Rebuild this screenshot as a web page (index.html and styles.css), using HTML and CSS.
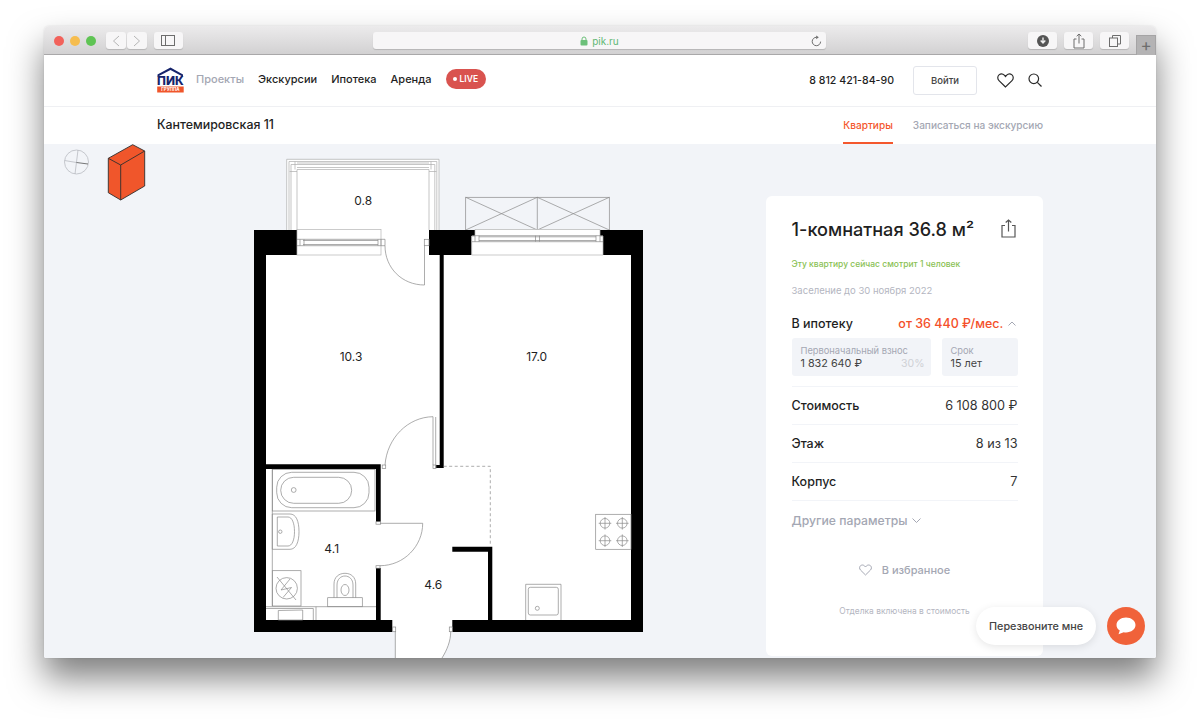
FILE: index.html
```html
<!DOCTYPE html>
<html lang="ru">
<head>
  <meta charset="UTF-8">
  <meta name="viewport" content="width=device-width, initial-scale=1.0">
  <title>pik.ru</title>
  <link rel="stylesheet" href="styles.css">
</head>
<body>
  <div class="window">

    <!-- Панель браузера -->
    <div class="toolbar">
      <div class="lights">
        <span class="light red"></span>
        <span class="light yellow"></span>
        <span class="light green"></span>
      </div>
      <div class="tool-pair">
        <span class="tool-btn narrow">
          <svg width="8" height="12" viewBox="0 0 8 12"><path d="M7 1 1.500 6 7 11" class="tool-line faint"/></svg>
        </span>
        <span class="tool-btn narrow">
          <svg width="8" height="12" viewBox="0 0 8 12"><path d="M1 1 6.500 6 1 11" class="tool-line faint"/></svg>
        </span>
      </div>
      <span class="tool-btn wide sidebar-btn">
        <svg width="14" height="11" viewBox="0 0 14 11"><rect x=".5" y=".5" width="13" height="10" class="tool-line"/><path d="M4.500 .5v10" class="tool-line"/></svg>
      </span>
      <div class="address">
        <svg width="8" height="10" viewBox="0 0 8 10"><rect x=".5" y="4" width="7" height="5.500" rx="1" fill="#6cc07a"/><path d="M2 4.500V3a2 2 0 0 1 4 0v1.500" fill="none" stroke="#6cc07a"/></svg>
        <span class="address-text">pik.ru</span>
        <svg class="reload" width="11" height="12" viewBox="0 0 11 12"><path d="M9.600 6.600A4.200 4.200 0 1 1 5.500 2.300" class="tool-line"/><path d="M5.200 .4 7.800 2.300 5.200 4.200z" fill="#6d6d6d"/></svg>
      </div>
      <div class="tool-group">
        <span class="tool-btn wide">
          <svg width="12" height="12" viewBox="0 0 12 12"><circle cx="6" cy="6" r="6" fill="#555"/><path d="M6 2.500v5M3.700 5.500 6 8l2.300-2.500" fill="none" stroke="#eee" stroke-width="1.400"/></svg>
        </span>
        <span class="tool-btn wide">
          <svg width="12" height="16" viewBox="0 0 12 16"><path d="M3.500 6H1v9h10V6H8.500M6 10.500V1M3.700 3.200 6 1l2.300 2.200" class="tool-line"/></svg>
        </span>
        <span class="tool-btn wide">
          <svg width="12" height="12" viewBox="0 0 12 12"><rect x=".5" y="3" width="8" height="8.500" class="tool-line"/><path d="M3.500 3V.5h8v8.500H8.500" class="tool-line"/></svg>
        </span>
      </div>
      <span class="new-tab">+</span>
    </div>

    <!-- Шапка сайта -->
    <header class="nav">
      <a class="logo">
        <svg width="27" height="26" viewBox="0 0 27 26">
          <path d="M.5 7.500 13.500 .6 26 7.500V9.800L13.500 3 .5 9.800z" fill="#16246b"/>
          <text x="13.400" y="18.400" class="logo-name" text-anchor="middle">ПИК</text>
          <rect x=".2" y="19.500" width="26.500" height="6" fill="#f0562b"/>
          <text x="13.400" y="24.300" class="logo-sub" text-anchor="middle">ГРУППА</text>
        </svg>
      </a>
      <a class="nav-link muted">Проекты</a>
      <a class="nav-link">Экскурсии</a>
      <a class="nav-link">Ипотека</a>
      <a class="nav-link">Аренда</a>
      <span class="live"><i></i>LIVE</span>
      <span class="phone">8 812 421-84-90</span>
      <button class="login">Войти</button>
      <svg class="heart-icon" width="17" height="15" viewBox="0 0 17 15"><path d="M8.500 14 2 7.600C.3 5.900.4 3.300 2 1.900 3.700.5 6 .8 7.300 2.200L8.500 3.500 9.700 2.200C11 .8 13.300.5 15 1.900c1.600 1.400 1.700 4 0 5.700z" fill="none" stroke="#2b2b2b" stroke-width="1.200"/></svg>
      <svg class="search-icon" width="14" height="14" viewBox="0 0 14 14"><circle cx="5.800" cy="5.800" r="4.800" fill="none" stroke="#2b2b2b" stroke-width="1.200"/><path d="M9.300 9.300 13.500 13.500" stroke="#2b2b2b" stroke-width="1.200"/></svg>
    </header>

    <div class="subnav">
      <span class="building">Кантемировская 11</span>
      <a class="tab active">Квартиры</a>
      <a class="tab">Записаться на экскурсию</a>
    </div>

    <!-- Планировка и карточка -->
    <main class="content">
      <svg class="plan" width="722" height="514" viewBox="44 144 722 514">
        <!-- компас и корпус -->
        <circle cx="76.500" cy="162" r="12" class="compass"/>
        <path d="M78 150 75 174M64.500 160.500 76.500 162.500" class="compass"/>
        <path d="M76.500 162.500 88 164" class="compass-hand"/>
        <path d="M108.300 158.300 132.700 144.700 144.700 151V186L120.700 200 108.300 192.700z" class="block"/>
        <path d="M108.300 158.300 120.700 165 144.700 151M120.700 165V200" class="block"/>

        <!-- лоджия -->
        <rect x="286.700" y="159.300" width="152.300" height="71" class="floor"/>
        <path d="M286.700 230V159.300H439V230M289 230V161.500H436.800V230M291 230V164.500H434.800V230M297 230V169.500H429V230M297 163H429M297 167.500H429" class="thin pale"/>
        <path d="M289.500 171.500H297M429 171.500H436.500M295 161.500V169.500M431 161.500V169.500" class="thin pale"/>

        <!-- балкон у кухни -->
        <rect x="465.700" y="197.300" width="143.600" height="33" class="thin"/>
        <path d="M537.300 197.300V230M465.700 197.300 537.300 230M537.300 197.300 465.700 230M537.300 197.300 609.300 230M609.300 197.300 537.300 230" class="thin"/>

        <!-- полы -->
        <rect x="266" y="230" width="365" height="392" class="floor"/>
        <path d="M392 620H452.300V631.700H450.700C450.700 641 447 650 442 658H395.300V631.700H392z" class="floor"/>

        <!-- стены -->
        <path d="M254 230H297V255H266V620H392.300V632H254z" class="wall"/>
        <path d="M429 230H475V236H471.700V255H443.700V468H435.700V465H439.700V255H429z" class="wall"/>
        <path d="M600 230H643V632H452.300V620H631V255H603V236H600z" class="wall"/>
        <path d="M266 464.300H380.700V469H266z" class="wall"/>
        <path d="M376 469H380.700V521.700H376zM376 568H380.700V620H376z" class="wall"/>
        <path d="M452.300 546.700H492.300V620H488V551.700H452.300z" class="wall"/>
        <path d="M443.700 466.300H490.300V546" class="dash"/>

        <!-- окна -->
        <rect x="297" y="229.500" width="84" height="25.500" class="glass"/>
        <path d="M297 239.300H385M297 245.700H385M303 240.500H378M303 244.500H378M300 239.300V245.700M304 239.300V245.700M378 239.300V245.700M381 239.300V245.700M385 239.300V245.700" class="thin"/>
        <rect x="424.300" y="239.300" width="4.700" height="6.400" class="thin"/>
        <path d="M475 229.500H600V236H603V255H471.700V236H475z" class="glass"/>
        <path d="M472 235.700H603M472 241.700H603M479 236.800H596M479 240.500H596M475 235.700V241.700M479 235.700V241.700M535.500 235.700V241.700M539.500 235.700V241.700M596 235.700V241.700M600 235.700V241.700" class="thin"/>

        <!-- двери -->
        <path d="M385 245.700C385 268 402 285 424.500 285V245.700" class="thin"/>
        <path d="M385 465C387 438 408 417 433 416.700V465M435.700 417V465" class="thin"/>
        <path d="M380 523.300H422.700C422.700 546 404 565.700 380 565.700" class="thin"/>
        <path d="M395.300 631.700V658M450.700 631.700C450.700 641 447 650 442 658" class="thin"/>
        <rect x="382.200" y="465" width="3.500" height="3.500" class="thin"/>
        <rect x="433" y="465" width="3" height="3.500" class="thin"/>
        <rect x="376" y="521.700" width="4.700" height="2.500" class="thin"/>
        <rect x="376" y="565.700" width="4" height="2.500" class="thin"/>
        <rect x="392.700" y="627" width="3" height="4.700" class="thin"/>
        <rect x="449.300" y="627" width="3" height="4.700" class="thin"/>

        <!-- ванная -->
        <rect x="272.300" y="469.300" width="102.700" height="41.700" class="thin"/>
        <rect x="276.700" y="472.300" width="92.300" height="35.400" rx="15" class="thin"/>
        <rect x="280.700" y="477.300" width="71" height="26" rx="13" class="thin"/>
        <circle cx="293.700" cy="490" r="2.400" class="thin"/>
        <path d="M272.300 514H290C296 514 299 521 299 531.700 299 542 296 549.300 290 549.300H272.300z" class="thin"/>
        <path d="M277.300 517H288C292 517 294.500 523 294.500 531.700 294.500 540 292 546 288 546H277.300z" class="thin"/>
        <circle cx="280.300" cy="531.700" r="1.700" class="thin"/>
        <path d="M272.300 469V606" class="thin"/>
        <rect x="272.300" y="570.700" width="28.700" height="35.300" class="thin"/>
        <circle cx="286.700" cy="588.300" r="10.700" class="thin"/>
        <path d="M277 577 296 600M290 579 281 590 291.500 587.500 283 597.500" class="thin"/>
        <rect x="327.700" y="597.700" width="34.600" height="9" class="thin"/>
        <path d="M334 597.700V584C334 577 339 573.300 345 573.300S355.700 577 355.700 584V597.700" class="thin"/>
        <path d="M337 597.700V585C337 579 341 576 345 576S353 579 353 585V597.700" class="thin"/>
        <ellipse cx="345" cy="590" rx="4" ry="5.500" class="thin"/>
        <path d="M266 606.700H376M266 608.500H313.300V620M316 606.700V620M278.300 610.500 302.700 610V620H278.300z" class="thin"/>

        <!-- плита и душ -->
        <rect x="595.700" y="514.300" width="35.300" height="35" class="thin"/>
        <g class="thin">
          <circle cx="605" cy="523.300" r="4.800"/><path d="M605 517V529.600M598.700 523.300H611.300"/>
          <circle cx="622.300" cy="523.300" r="4.800"/><path d="M622.300 517V529.600M616 523.300H628.600"/>
          <circle cx="605" cy="540.700" r="4.800"/><path d="M605 534.400V547M598.700 540.700H611.300"/>
          <circle cx="622.300" cy="540.700" r="4.800"/><path d="M622.300 534.400V547M616 540.700H628.600"/>
        </g>
        <path d="M525.700 620V584.300H561V620" class="thin"/>
        <rect x="528.300" y="587.300" width="30" height="27.700" rx="2" class="thin"/>
        <circle cx="537.300" cy="608.300" r="2" class="thin"/>

        <!-- площади -->
        <text x="363.300" y="204.500" class="area">0.8</text>
        <text x="351" y="361" class="area">10.3</text>
        <text x="536.700" y="361" class="area">17.0</text>
        <text x="331.700" y="553" class="area">4.1</text>
        <text x="433.300" y="589" class="area">4.6</text>
      </svg>

      <aside class="card">
        <div class="card-head">
          <h1>1-комнатная 36.8 м²</h1>
          <svg width="15" height="19" viewBox="0 0 15 19"><path d="M4 6.500H1V18H14V6.500H11M7.500 12.500V1M4.700 3.500 7.500 1l2.800 2.500" fill="none" stroke="#555" stroke-width="1.200"/></svg>
        </div>
        <p class="watching">Эту квартиру сейчас смотрит 1 человек</p>
        <p class="settle">Заселение до 30 ноября 2022</p>
        <div class="mortgage-row">
          <span class="row-name">В ипотеку</span>
          <span class="price">от 36 440 ₽/мес.
            <svg width="8" height="5" viewBox="0 0 8 5"><path d="M.5 4.500 4 1 7.500 4.500" fill="none" stroke="#a4a7b3"/></svg>
          </span>
        </div>
        <div class="mortgage-boxes">
          <div class="mbox first">
            <span class="mbox-label">Первоначальный взнос</span>
            <span class="mbox-value">1 832 640 ₽</span>
            <span class="percent">30%</span>
          </div>
          <div class="mbox second">
            <span class="mbox-label">Срок</span>
            <span class="mbox-value">15 лет</span>
          </div>
        </div>
        <div class="param"><span class="row-name">Стоимость</span><span class="param-value">6 108 800 ₽</span></div>
        <div class="param"><span class="row-name">Этаж</span><span class="param-value">8 из 13</span></div>
        <div class="param"><span class="row-name">Корпус</span><span class="param-value">7</span></div>
        <div class="more">Другие параметры
          <svg width="9" height="5" viewBox="0 0 9 5"><path d="M.5 .5 4.500 4.500 8.500 .5" fill="none" stroke="#a4a7b3"/></svg>
        </div>
        <div class="favorite">
          <svg width="13" height="12" viewBox="0 0 17 15"><path d="M8.500 14 2 7.600C.3 5.900.4 3.300 2 1.900 3.700.5 6 .8 7.300 2.200L8.500 3.500 9.700 2.200C11 .8 13.300.5 15 1.900c1.600 1.400 1.700 4 0 5.700z" fill="none" stroke="#a4a7b3" stroke-width="1.300"/></svg>
          В избранное
        </div>
        <p class="finish">Отделка включена в стоимость</p>
      </aside>

      <!-- Обратный звонок поверх контента -->
      <div class="callback">
        <span class="callback-label">Перезвоните мне</span>
        <span class="chat">
          <svg width="20" height="18" viewBox="0 0 20 18"><path d="M10 .5C4.800.5.500 3.700.500 8c0 2.400 1.300 4.300 3.300 5.600L2.500 17.300l5.200-2.100c.7.100 1.500.2 2.300.2 5.200 0 9.500-3.200 9.500-7.400S15.200.5 10 .5z" fill="#fff"/></svg>
        </span>
      </div>
    </main>
  </div>
</body>
</html>
```

FILE: styles.css
```css
/* Общее */
* {
  box-sizing: border-box;
}

body {
  margin: 0;
  height: 722px;
  overflow: hidden;
  background: #fff;
  font-family: 'Inter', 'Liberation Sans', sans-serif;
  color: #1f1f1f;
}

a {
  text-decoration: none;
  color: inherit;
}

/* Окно браузера */
.window {
  width: 1112px;
  height: 632px;
  margin: 26px 0 0 44px;
  border-radius: 5px 5px 2px 2px;
  overflow: hidden;
  background: #fff;
  box-shadow: 0 20px 34px rgba(0, 0, 0, 0.5), 0 0 2px rgba(0, 0, 0, 0.12);
}

.toolbar {
  display: flex;
  align-items: flex-start;
  height: 29px;
  padding: 6px 0 0 10px;
  background: linear-gradient(to bottom, #ecebec, #d2d1d2);
  border-bottom: 1px solid #a9a8a9;
}

.lights {
  display: flex;
  gap: 6px;
  margin-top: 4px;
  margin-right: 10px;
}

.light {
  width: 10px;
  height: 10px;
  border-radius: 50%;
}

.light.red { background: #f2625b; }
.light.yellow { background: #f6bd4f; }
.light.green { background: #5fc454; }

.tool-pair {
  display: flex;
  gap: 1px;
  margin-right: 7px;
}

.tool-btn {
  display: flex;
  align-items: center;
  justify-content: center;
  height: 17px;
  background: #f7f6f7;
  border-radius: 3px;
  box-shadow: 0 1px 1px rgba(0, 0, 0, 0.15);
}

.tool-btn.narrow { width: 20px; }
.tool-btn.wide { width: 29px; }

.tool-line {
  fill: none;
  stroke: #6d6d6d;
  stroke-width: 1;
}

.tool-line.faint {
  stroke: #b5b5b5;
}

.address {
  position: relative;
  display: flex;
  align-items: center;
  justify-content: center;
  gap: 4px;
  width: 454px;
  height: 17px;
  margin-left: 190px;
  background: #f7f6f7;
  border-radius: 3px;
  box-shadow: 0 1px 1px rgba(0, 0, 0, 0.15);
}

.address-text {
  font-size: 10px;
  color: #62b874;
}

.reload {
  position: absolute;
  right: 4px;
  top: 3px;
}

.tool-group {
  display: flex;
  gap: 7px;
  margin-left: 202px;
}

.new-tab {
  width: 20px;
  height: 20px;
  margin-left: 7px;
  margin-top: 3px;
  background: #b4b3b4;
  border: 1px solid #a5a4a5;
  border-bottom: none;
  color: #6d6d6d;
  font-size: 17px;
  line-height: 19px;
  text-align: center;
}

/* Шапка */
.nav {
  display: flex;
  align-items: center;
  height: 52px;
  padding: 0 113px;
  border-bottom: 1px solid #eff0f3;
  font-size: 11px;
  font-weight: 500;
}

.logo {
  display: flex;
  margin-right: 12px;
  margin-top: -2px;
}

.logo svg {
  overflow: visible;
}

.logo-name {
  font-size: 11.800px;
  font-weight: 800;
  fill: #16246b;
}

.logo-sub {
  font-size: 4.400px;
  font-weight: 700;
  fill: #fff;
}

.nav-link {
  margin-right: 14px;
  margin-top: -4px;
  color: #1f1f1f;
}

.nav-link.muted {
  color: #a4a7b3;
}

.live {
  display: flex;
  align-items: center;
  gap: 3px;
  height: 20px;
  padding: 0 8px 0 7px;
  margin-top: -4px;
  background: #d9534f;
  border-radius: 10px;
  color: #fff;
  font-size: 8.500px;
  font-weight: 600;
}

.live i {
  width: 4px;
  height: 4px;
  border-radius: 50%;
  background: #fff;
}

.phone {
  margin-left: auto;
  margin-right: 19px;
  font-size: 10.600px;
}

.login {
  width: 64px;
  height: 29px;
  margin-right: 20px;
  background: #fff;
  border: 1px solid #e3e5eb;
  border-radius: 3px;
  font-family: inherit;
  font-size: 9.500px;
  font-weight: 500;
  color: #444;
}

.heart-icon {
  margin-right: 14px;
}

.search-icon {
  margin-top: -2px;
  margin-right: 1px;
}

/* Подшапка */
.subnav {
  display: flex;
  align-items: center;
  height: 37px;
  padding: 0 113px;
  font-weight: 500;
}

.building {
  margin-right: auto;
  margin-top: -3px;
  font-size: 12.400px;
}

.tab {
  display: flex;
  align-items: center;
  height: 100%;
  margin-left: 20px;
  padding-top: 1px;
  border-bottom: 2px solid transparent;
  font-size: 10.080px;
  color: #a4a7b3;
}

.tab.active {
  color: #f4572d;
  border-bottom-color: #f4572d;
}

/* Контент */
.content {
  position: relative;
  display: flex;
  align-items: flex-start;
  height: 514px;
  background: #f2f4f8;
}

.plan {
  flex: none;
  display: block;
}

.wall { fill: #000; }
.floor { fill: #fff; }

.glass {
  fill: #fff;
  stroke: #b5b5b5;
  stroke-width: 0.700;
}

.thin {
  fill: none;
  stroke: #8a8a8a;
  stroke-width: 0.700;
}

.thin.pale {
  stroke: #aeaeae;
}

.dash {
  fill: none;
  stroke: #8a8a8a;
  stroke-width: 0.700;
  stroke-dasharray: 3 2.500;
}

.compass {
  fill: none;
  stroke: #b9bbc2;
  stroke-width: 0.800;
}

.compass-hand {
  stroke: #555;
  stroke-width: 0.800;
}

.block {
  fill: #f0562b;
  stroke: #2f2f2f;
  stroke-width: 0.900;
  stroke-linejoin: round;
}

.area {
  font-size: 12px;
  text-anchor: middle;
  fill: #1f1f1f;
}

/* Карточка */
.card {
  flex: none;
  width: 277px;
  height: 460px;
  margin-top: 51.500px;
  padding: 0 25.500px;
  background: #fff;
  border-radius: 6px;
}

.card-head {
  display: flex;
  align-items: center;
  justify-content: space-between;
  height: 38px;
  margin-top: 14px;
  padding-right: 2px;
}

.card h1 {
  margin: 0;
  font-size: 18.100px;
  font-weight: 500;
}

.watching {
  margin: 10.500px 0 0;
  font-size: 8.500px;
  font-weight: 500;
  line-height: 12px;
  color: #8ac154;
}

.settle {
  margin: 15px 0 0;
  font-size: 9.500px;
  line-height: 12px;
  color: #b4b6bf;
}

.mortgage-row {
  display: flex;
  justify-content: space-between;
  align-items: center;
  height: 16px;
  margin-top: 18px;
}

.row-name {
  font-size: 12.500px;
  font-weight: 500;
}

.price {
  font-size: 12.500px;
  font-weight: 500;
  color: #f4502a;
  padding-right: 2px;
}

.price svg {
  margin-left: 1px;
  vertical-align: 2px;
}

.mortgage-boxes {
  display: flex;
  gap: 11px;
  margin-top: 7px;
  padding-bottom: 10px;
}

.mbox {
  position: relative;
  display: flex;
  flex-direction: column;
  justify-content: center;
  height: 38px;
  padding: 0 9px;
  background: #f2f4f8;
  border-radius: 3px;
}

.mbox.first { width: 139px; }
.mbox.second { width: 76px; }

.mbox-label {
  font-size: 9.300px;
  line-height: 13px;
  color: #a4a7b3;
}

.mbox-value {
  font-size: 10.800px;
  line-height: 14px;
  color: #444;
}

.percent {
  position: absolute;
  right: 6px;
  bottom: 6px;
  font-size: 10.500px;
  color: #cfd1d6;
}

.param {
  display: flex;
  justify-content: space-between;
  align-items: center;
  height: 38px;
  border-top: 1px solid #f2f4f8;
}

.param-value {
  font-size: 12.700px;
  color: #333;
}

.more {
  display: flex;
  align-items: center;
  gap: 4px;
  height: 39px;
  border-top: 1px solid #f2f4f8;
  font-size: 12.200px;
  font-weight: 500;
  color: #a4a7b3;
}

.favorite {
  display: flex;
  align-items: center;
  justify-content: center;
  gap: 10px;
  margin-top: 23px;
  height: 16px;
  font-size: 11px;
  font-weight: 500;
  color: #a4a7b3;
}

.finish {
  margin: 27px 0 0;
  font-size: 8.400px;
  line-height: 12px;
  text-align: center;
  color: #b4b6bf;
}

/* Перезвоните мне */
.callback {
  position: absolute;
  right: 11px;
  bottom: 13px;
  display: flex;
  align-items: center;
  gap: 11px;
}

.callback-label {
  display: flex;
  align-items: center;
  justify-content: center;
  width: 120px;
  height: 38px;
  background: #fff;
  border-radius: 19px;
  box-shadow: 0 2px 8px rgba(0, 0, 0, 0.1);
  font-size: 10.800px;
  font-weight: 500;
  color: #444;
}

.chat {
  display: flex;
  align-items: center;
  justify-content: center;
  width: 38px;
  height: 38px;
  background: #f0623a;
  border-radius: 50%;
}
```
